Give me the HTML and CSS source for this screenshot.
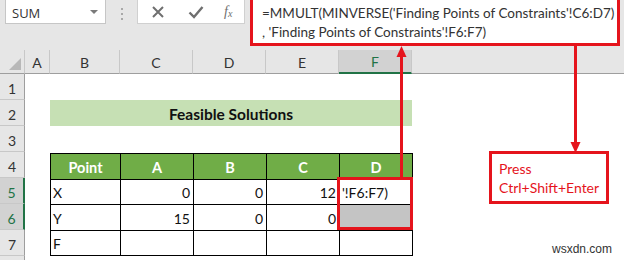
FILE: index.html
```html
<!DOCTYPE html>
<html>
<head>
<meta charset="utf-8">
<link rel="stylesheet" href="styles.css">
</head>
<body>
<div class="app">
  <div class="bar">
    <div class="namebox"><span class="name">SUM</span><span class="caret"></span></div>
    <div class="dots"><i></i><i></i><i></i></div>
    <div class="fnbox">
      <svg class="ic" width="14" height="14" viewBox="0 0 14 14"><path d="M2 2 L12 12 M12 2 L2 12" stroke="#6f6f6f" stroke-width="2" fill="none"/></svg>
      <svg class="ic" width="16" height="14" viewBox="0 0 16 14"><path d="M1.5 7.5 L6 12 L14.5 2" stroke="#6f6f6f" stroke-width="2.4" fill="none"/></svg>
      <span class="fx">f<sub>x</sub></span>
    </div>
    <div class="formula">
      <div>=MMULT(MINVERSE('Finding Points of Constraints'!C6:D7)</div>
      <div>, 'Finding Points of Constraints'!F6:F7)</div>
    </div>
  </div>
  <div class="sheet">
    <div class="corner"><span class="tri"></span></div>
    <div class="ch">A</div>
    <div class="ch">B</div>
    <div class="ch">C</div>
    <div class="ch">D</div>
    <div class="ch">E</div>
    <div class="ch sel">F</div>
    <div class="ch rest"></div>

    <div class="rh r1">1</div>
    <div class="rh r2">2</div>
    <div class="rh r3">3</div>
    <div class="rh r4">4</div>
    <div class="rh r5 sel">5</div>
    <div class="rh r6 sel">6</div>
    <div class="rh r7">7</div>
    <div class="rh r8"></div>

    <div class="title">Feasible Solutions</div>

    <table class="tbl">
      <colgroup><col class="cb"><col class="cc"><col class="cc"><col class="cc"><col class="cc"></colgroup>
      <tr class="hd"><td>Point</td><td>A</td><td>B</td><td>C</td><td>D</td></tr>
      <tr><td class="l">X</td><td>0</td><td>0</td><td>12</td><td class="l edit">'!F6:F7)</td></tr>
      <tr><td class="l">Y</td><td>15</td><td>0</td><td>0</td><td class="grey"></td></tr>
      <tr><td class="l">F</td><td></td><td></td><td></td><td></td></tr>
    </table>
  </div>

  <svg class="arrows" width="624" height="260" viewBox="0 0 624 260">
    <rect x="400" y="54" width="3" height="124" fill="#e5141c"/>
    <polygon points="401.5,46 396.5,57 406.5,57" fill="#e5141c"/>
    <rect x="574" y="45" width="3" height="98" fill="#e5141c"/>
    <polygon points="575.5,153 570.5,142 580.5,142" fill="#e5141c"/>
  </svg>
  <div class="selbox"></div>
  <div class="press">Press<br>Ctrl+Shift+Enter</div>
  <div class="mark">wsxdn.com</div>
</div>
</body>
</html>
```
FILE: styles.css
```css
html, body {
  margin: 0;
  padding: 0;
}
body {
  width: 624px;
  height: 260px;
  overflow: hidden;
  background: #e6e6e6;
  font-family: Lato, "Open Sans", sans-serif;
}
.app {
  position: relative;
  width: 624px;
  height: 260px;
  overflow: hidden;
}
.bar {
  height: 50px;
  display: flex;
  align-items: flex-start;
  background: #e6e6e6;
}
.namebox {
  margin-left: 5px;
  width: 101px;
  height: 25px;
  margin-top: -1px;
  background: #fff;
  border: 1px solid #c6c6c6;
  display: flex;
  align-items: center;
  justify-content: space-between;
  padding: 0 7px 0 6px;
  box-sizing: border-box;
}
.name {
  font-family: "Open Sans", sans-serif;
  font-size: 13px;
  color: #333;
  margin-top: 2px;
}
.caret {
  width: 0;
  height: 0;
  border-left: 4px solid transparent;
  border-right: 4px solid transparent;
  border-top: 4px solid #7a7a7a;
}
.dots {
  width: 31px;
  display: flex;
  flex-direction: column;
  align-items: center;
  gap: 3px;
  padding-top: 8px;
}
.dots i {
  width: 2px;
  height: 2px;
  background: #a8a8a8;
}
.fnbox {
  width: 108px;
  height: 25px;
  margin-top: -1px;
  background: #fff;
  border: 1px solid #d0d0d0;
  box-sizing: border-box;
  display: flex;
  align-items: center;
  padding: 1px 0 0 13px;
  gap: 23px;
}
.fx {
  font-family: "Liberation Serif", serif;
  font-style: italic;
  font-size: 14px;
  color: #6f6f6f;
  margin-left: -3px;
}
.fx sub {
  font-size: 10px;
  vertical-align: -1px;
}
.formula {
  margin-left: 5px;
  margin-top: -3px;
  width: 370px;
  height: 49px;
  background: #fff;
  border: 3px solid #e5141c;
  box-sizing: border-box;
  padding: 4px 0 0 9px;
  font-family: Lato, sans-serif;
  font-size: 13.5px;
  line-height: 19px;
  color: #333;
  white-space: nowrap;
}
.sheet {
  display: grid;
  grid-template-columns: 25px 25px 70px 73px 73px 73px 73px 1fr;
  grid-template-rows: 24px repeat(8, 26px);
  background: #fff;
  font-size: 14px;
  color: #222;
}
.corner, .ch {
  background: #e6e6e6;
  border-bottom: 1px solid #9e9e9e;
  box-sizing: border-box;
}
.corner {
  position: relative;
  border-right: 1px solid #c8c8c8;
}
.tri {
  position: absolute;
  right: 3px;
  bottom: 3px;
  width: 0;
  height: 0;
  border-left: 12px solid transparent;
  border-bottom: 12px solid #b8b8b8;
}
.ch {
  display: flex;
  align-items: center;
  justify-content: center;
  border-right: 1px solid #c8c8c8;
  font-size: 14px;
  color: #333;
  padding-top: 1px;
}
.ch.sel {
  background: #d2d2d2;
  border-bottom: 2px solid #217346;
  color: #217346;
}
.ch.rest {
  border-right: none;
}
.rh {
  grid-column: 1;
  background: #e6e6e6;
  border-right: 1px solid #9e9e9e;
  border-bottom: 1px solid #c8c8c8;
  box-sizing: border-box;
  display: flex;
  align-items: flex-end;
  justify-content: center;
  padding-bottom: 2px;
  font-size: 14px;
  color: #333;
}
.rh.sel {
  background: #d2d2d2;
  border-right: 2px solid #217346;
  color: #217346;
}
.r1 { grid-row: 2; }
.r2 { grid-row: 3; }
.r3 { grid-row: 4; }
.r4 { grid-row: 5; }
.r5 { grid-row: 6; }
.r6 { grid-row: 7; }
.r7 { grid-row: 8; }
.r8 { grid-row: 9; }
.title {
  grid-column: 3 / 8;
  grid-row: 3;
  background: #c6e0b4;
  display: flex;
  align-items: center;
  justify-content: center;
  font-weight: bold;
  font-size: 15.5px;
  color: #111;
  padding-top: 2px;
}
.tbl {
  grid-column: 3 / 8;
  grid-row: 5 / 9;
  border-collapse: collapse;
  table-layout: fixed;
  width: 363px;
  margin: 1px 0 0 0;
  font-size: 14px;
}
.cb { width: 70px; }
.cc { width: 73px; }
.tbl td {
  border: 1px solid #000;
  height: 25px;
  padding: 2px 3px 0;
  box-sizing: border-box;
  text-align: right;
  color: #111;
  white-space: nowrap;
  overflow: visible;
}
.tbl .hd td {
  background: #70ad47;
  color: #fff;
  font-weight: bold;
  font-size: 14.5px;
  text-align: center;
}
.tbl td.l {
  text-align: left;
  padding-left: 2px;
}
.tbl td.grey {
  background: #c4c4c4;
}
.arrows {
  position: absolute;
  left: 0;
  top: 0;
}
.selbox {
  position: absolute;
  left: 337px;
  top: 177px;
  width: 76px;
  height: 53px;
  border: 3px solid #e5141c;
  box-sizing: border-box;
}
.press {
  position: absolute;
  left: 489px;
  top: 151px;
  width: 120px;
  height: 53px;
  border: 3px solid #e5141c;
  box-sizing: border-box;
  background: #fff;
  padding: 5px 0 0 7px;
  font-size: 14px;
  line-height: 19px;
  color: #e5141c;
}
.mark {
  position: absolute;
  left: 552px;
  top: 242px;
  font-family: "Liberation Sans", Arial, sans-serif;
  font-size: 12px;
  color: #333;
}
```
